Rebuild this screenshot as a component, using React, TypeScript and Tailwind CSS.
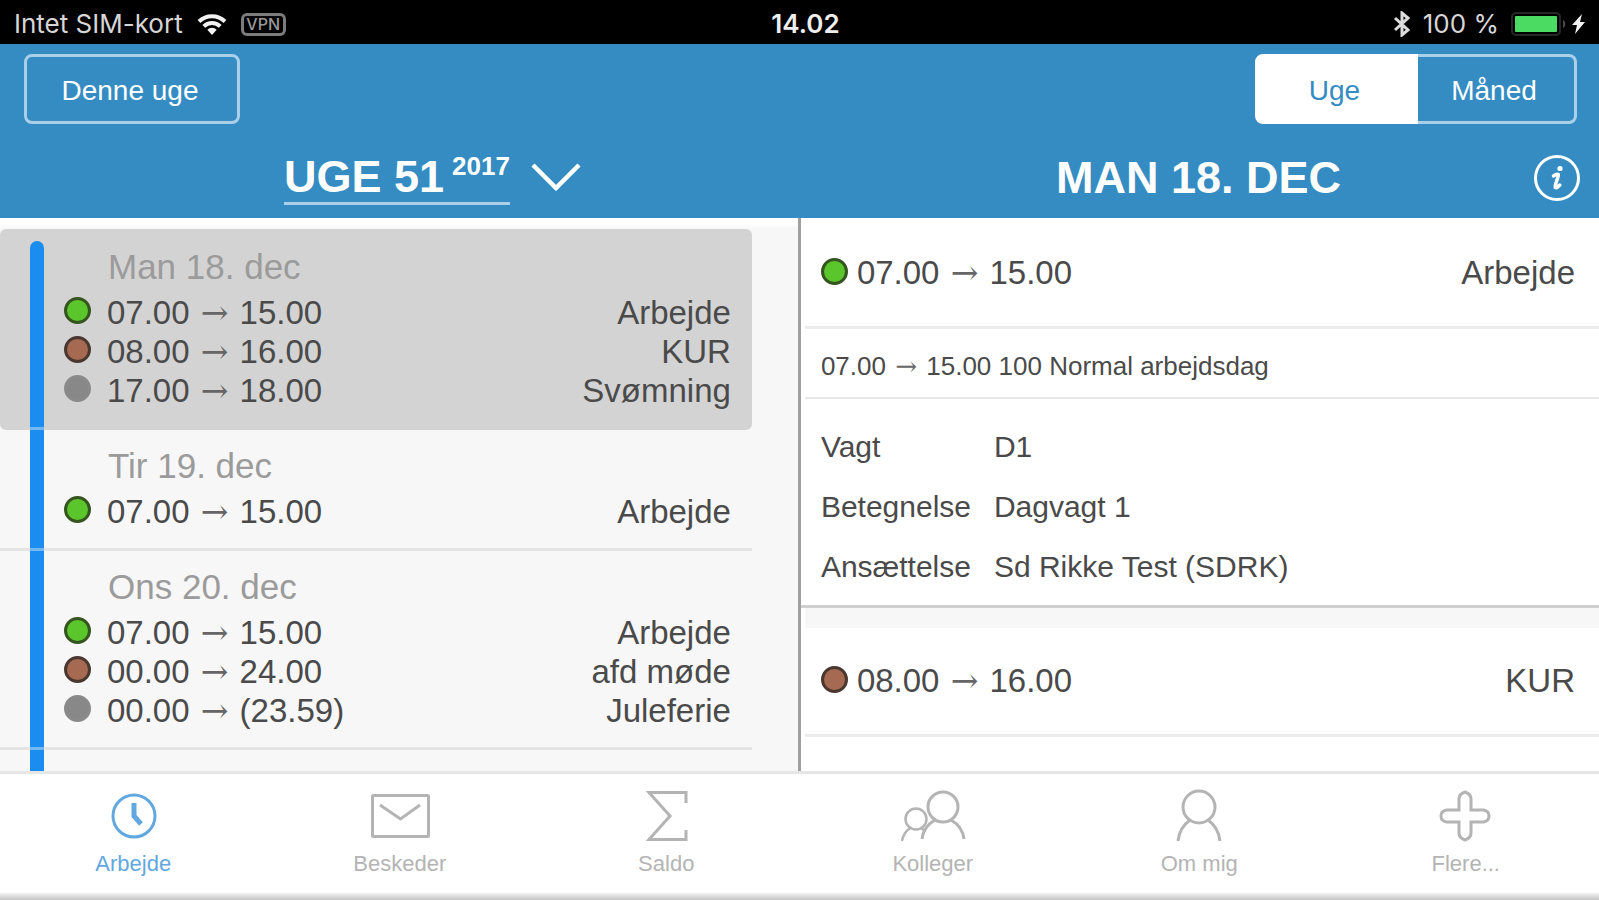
import React, { useState } from 'react';

type Shift = { color: 'green' | 'brown' | 'gray'; from: string; to: string; label: string };
type Day = { title: string; shifts: Shift[] };

const days: Day[] = [
  {
    title: 'Man 18. dec',
    shifts: [
      { color: 'green', from: '07.00', to: '15.00', label: 'Arbejde' },
      { color: 'brown', from: '08.00', to: '16.00', label: 'KUR' },
      { color: 'gray', from: '17.00', to: '18.00', label: 'Svømning' },
    ],
  },
  {
    title: 'Tir 19. dec',
    shifts: [{ color: 'green', from: '07.00', to: '15.00', label: 'Arbejde' }],
  },
  {
    title: 'Ons 20. dec',
    shifts: [
      { color: 'green', from: '07.00', to: '15.00', label: 'Arbejde' },
      { color: 'brown', from: '00.00', to: '24.00', label: 'afd møde' },
      { color: 'gray', from: '00.00', to: '(23.59)', label: 'Juleferie' },
    ],
  },
];

const details = [
  ['Vagt', 'D1'],
  ['Betegnelse', 'Dagvagt 1'],
  ['Ansættelse', 'Sd Rikke Test (SDRK)'],
];

const dotStyles = {
  green: 'border-[#36541f] bg-[#5ac62c]',
  brown: 'border-[#4a3830] bg-[#a56a51]',
  gray: 'border-[#8a8a8a] bg-[#888888]',
};

function Dot({ color }: { color: Shift['color'] }) {
  return <span className={`size-[27px] shrink-0 rounded-full border-[3px] ${dotStyles[color]}`} />;
}

function Span({ from, to }: { from: string; to: string }) {
  return (
    <>
      {from}{' '}
      <span className="px-[2px] font-['DejaVu_Serif',serif] leading-5 text-[#666666]">→</span>{' '}
      {to}
    </>
  );
}

function StatusBar() {
  return (
    <div className="grid h-11 shrink-0 grid-cols-[1fr_auto_1fr] items-center bg-black pl-[14px] pr-3 pt-1 font-['Inter',sans-serif] text-[26px] leading-8 text-[#d6d6d6]">
      <div className="flex items-center gap-[14px]">
        <span>Intet SIM-kort</span>
        <svg viewBox="0 0 30 23" className="h-[23px] w-[30px]" fill="none" stroke="#f2f2f2" strokeWidth="4">
          <path d="M2 8.500a18.500 18.500 0 0 1 26 0" />
          <path d="M6.800 13.300a11.600 11.600 0 0 1 16.400 0" />
          <path d="M10.300 16.800a6.600 6.600 0 0 1 9.400 0L15 22Z" fill="#f2f2f2" stroke="none" />
        </svg>
        <span className="flex h-[23px] w-[45px] items-center justify-center rounded-md border-[3px] border-[#7c7c7c] text-[16px] font-medium leading-none text-[#9a9a9a]">
          VPN
        </span>
      </div>
      <div className="pl-[10px] text-center font-semibold text-[#eeeeee]">14.02</div>
      <div className="flex items-center justify-end gap-3">
        <svg viewBox="0 0 18 26" className="h-[26px] w-[18px]" fill="none" stroke="#dcdcdc" strokeWidth="3">
          <path d="M2 7l13 12-6 5V2l6 5L2 19" />
        </svg>
        <span>100 %</span>
        <svg viewBox="0 0 76 24" className="h-6 w-[76px]">
          <rect x="1" y="1" width="48" height="22" rx="4" fill="none" stroke="#262626" strokeWidth="2" />
          <rect x="4" y="4" width="42" height="16" rx="1" fill="#4cdb62" />
          <path d="M52 8c3 1 3 7 0 8Z" fill="#4a4a4a" />
          <path d="M71 2l-10 11h5l-2 9 10-12h-5Z" fill="#f2f2f2" />
        </svg>
      </div>
    </div>
  );
}

function Header({ view, onView }: { view: string; onView: (v: string) => void }) {
  return (
    <header className="shrink-0 bg-[#348cc2] text-white">
      <div className="flex items-center justify-between pl-6 pr-[22px] pt-[10px] text-[28px] leading-8">
        <button type="button" className="h-[70px] w-[216px] rounded-lg border-[3px] border-[#a9d0e8] pr-1 pt-1">
          Denne uge
        </button>
        <div className="flex h-[70px] w-[322px]">
          {['Uge', 'Måned'].map((name) => (
            <button
              key={name}
              type="button"
              aria-pressed={view === name}
              onClick={() => onView(name)}
              className={
                view === name
                  ? 'w-[163px] border-[3px] border-white bg-white pr-1 pt-1 text-[#348cc2] first:rounded-l-lg last:rounded-r-lg'
                  : 'flex-1 border-[3px] border-[#a9d0e8] pr-1 pt-1 first:rounded-l-lg first:border-r-0 last:rounded-r-lg last:border-l-0'
              }
            >
              {name}
            </button>
          ))}
        </div>
      </div>
      <div className="flex h-[94px] items-center pt-[14px]">
        <div className="grid w-[49.9%] grid-cols-[1fr_auto_1fr] items-center pr-1">
          <span />
          <h1 className="flex items-start gap-2 border-b-[3px] border-[#a9d0e8] text-[45px] font-bold leading-[50px]">
            <span>UGE 51</span>
            <span className="text-[26px] leading-7">2017</span>
          </h1>
          <button type="button" aria-label="Vælg uge" className="w-fit pl-5">
            <svg viewBox="0 0 52 32" className="h-8 w-[52px]" fill="none" stroke="white" strokeWidth="4.500">
              <path d="M3 3l23 23L49 3" />
            </svg>
          </button>
        </div>
        <div className="grid flex-1 grid-cols-[1fr_auto_1fr] items-center pr-[18px]">
          <span />
          <h2 className="pl-[18px] text-[45px] font-bold leading-[50px]">MAN 18. DEC</h2>
          <button type="button" aria-label="Information" className="justify-self-end">
            <svg viewBox="0 0 48 48" className="size-12" fill="none" stroke="white">
              <circle cx="24" cy="24" r="21.500" strokeWidth="3" />
              <circle cx="27" cy="14.500" r="2.600" fill="white" stroke="none" />
              <path d="M20.500 22c2-1.500 4-2 4.800-1.500.6 2-4 11-3 13 1 .8 3-.8 4.500-2.500" strokeWidth="3.500" strokeLinecap="round" />
            </svg>
          </button>
        </div>
      </div>
    </header>
  );
}

function DayRow({ day, selected }: { day: Day; selected: boolean }) {
  return (
    <li className={selected ? 'rounded-md bg-[#d3d3d3] pt-[2px]' : ''}>
      <div className="flex pl-[30px] pr-[21px]">
        <div className={selected ? 'mt-[10px] w-[14px] shrink-0 rounded-t-full bg-[#1b8df0]' : 'w-[14px] shrink-0 bg-[#1b8df0]'} />
        <div className="min-w-0 flex-1 pb-[17px] pl-5 pt-4">
          <h3 className="mb-[6px] pl-[44px] text-[35px] leading-10 text-[#9b9b9b]">{day.title}</h3>
          {day.shifts.map((s) => (
            <div key={s.from + s.label} className="flex items-start text-[33px] leading-[39px] text-[#4a4a4a]">
              <span className="mt-1 flex">
                <Dot color={s.color} />
              </span>
              <span className="pl-4">
                <Span from={s.from} to={s.to} />
              </span>
              <span className="ml-auto">{s.label}</span>
            </div>
          ))}
        </div>
      </div>
      <div className={selected ? 'flex h-[3px]' : 'flex h-[3px] bg-[#e4e4e4]'}>
        <span className="ml-[30px] w-[14px] bg-[#74b8f2]" />
      </div>
    </li>
  );
}

function ShiftHead({ color, from, to, label }: Shift) {
  return (
    <div className="ml-1 flex h-[109px] items-center border-b-[3px] border-[#ebebeb] pb-1 pl-4 pr-6 text-[33px] leading-[39px]">
      <Dot color={color} />
      <span className="pl-[9px] pt-[2px]">
        <Span from={from} to={to} />
      </span>
      <span className="ml-auto pt-[2px]">{label}</span>
    </div>
  );
}

const iconPaths: Record<string, React.ReactNode> = {
  Arbejde: (
    <>
      <circle cx="41" cy="28" r="21" />
      <path d="M41 15v13l7 8" strokeWidth="5" />
    </>
  ),
  Beskeder: (
    <>
      <rect x="12.500" y="7.500" width="56" height="41" rx="1" />
      <path d="M20 17l20.500 14L60 17" />
    </>
  ),
  Saldo: <path d="M60 15V4.500H23L44 28 23 51.500H60V42" />,
  Kolleger: (
    <>
      <circle cx="50" cy="19" r="15" />
      <circle cx="23" cy="31" r="10.500" strokeWidth="2.500" />
      <path d="M58 32c7 4 12 11 13 19M42 32c-7 4-12 11-13 19" />
      <path d="M17 40c-4 3-7 7-8 13M28 40l4 3" strokeWidth="2.500" />
    </>
  ),
  'Om mig': (
    <>
      <circle cx="40" cy="19" r="16" />
      <path d="M31 32c-7 5-11 12-12 21M49 32c7 5 11 12 12 21" />
    </>
  ),
  'Flere...': (
    <path d="M39 4q6 2 6 7V22H57.500q5.500 1 5.500 6t-5.500 6H45V45q0 5-6 7-6-2-6-7V34H20.500q-5.500-1-5.500-6t5.500-6H33V11q0-5 6-7Z" />
  ),
};

function TabBar() {
  return (
    <nav className="grid shrink-0 grid-cols-6 border-t-[3px] border-[#e6e6e6] bg-white pb-[15px] pt-[14px] text-[22px] leading-7">
      {Object.entries(iconPaths).map(([name, icon]) => (
        <a
          key={name}
          href={`#${name}`}
          className={
            name === 'Arbejde'
              ? 'flex flex-col items-center gap-[6px] text-[#62a8e0]'
              : 'flex flex-col items-center gap-[6px] text-[#b4b4b4]'
          }
        >
          <svg viewBox="0 0 80 56" className="h-14 w-20" fill="none" stroke="currentColor" strokeWidth="3">
            {icon}
          </svg>
          <span>{name}</span>
        </a>
      ))}
    </nav>
  );
}

export default function App() {
  const [view, setView] = useState('Uge');
  return (
    <div className="flex h-screen flex-col overflow-hidden bg-white font-['Liberation_Sans',Arial,sans-serif]">
      <StatusBar />
      <Header view={view} onView={setView} />
      <main className="flex min-h-0 flex-1 text-[#4a4a4a]">
        <section className="flex w-[49.9%] flex-col overflow-hidden bg-[#f7f7f7] pr-[46px]">
          <div className="-mr-[46px] h-[11px] shrink-0 bg-linear-to-b from-white from-50% to-[#f7f7f7]" />
          <ul className="shrink-0">
            {days.map((d, i) => (
              <DayRow key={d.title} day={d} selected={i === 0} />
            ))}
          </ul>
          <div className="ml-[30px] w-[14px] flex-1 bg-[#1b8df0]" />
        </section>
        <section className="min-w-0 flex-1 overflow-hidden border-l-[3px] border-[#a0a0a0] bg-white pt-[2px]">
          <ShiftHead color="green" from="07.00" to="15.00" label="Arbejde" />
          <p className="ml-1 border-b-2 border-[#e6e6e6] pb-[15px] pl-4 pt-[21px] text-[26px] leading-8">
            <Span from="07.00" to="15.00" /> 100 Normal arbejdsdag
          </p>
          <dl className="grid grid-cols-[173px_1fr] border-b-[3px] border-[#cfcfcf] pb-2 pl-5 pt-[18px] text-[30px] leading-[60px]">
            {details.map(([k, v]) => (
              <React.Fragment key={k}>
                <dt>{k}</dt>
                <dd>{v}</dd>
              </React.Fragment>
            ))}
          </dl>
          <div className="ml-1 h-5 bg-[#f7f7f7]" />
          <ShiftHead color="brown" from="08.00" to="16.00" label="KUR" />
        </section>
      </main>
      <TabBar />
      <div className="h-[7px] shrink-0 bg-linear-to-b from-[#f4f4f4] to-[#c4c4c4]" />
    </div>
  );
}
